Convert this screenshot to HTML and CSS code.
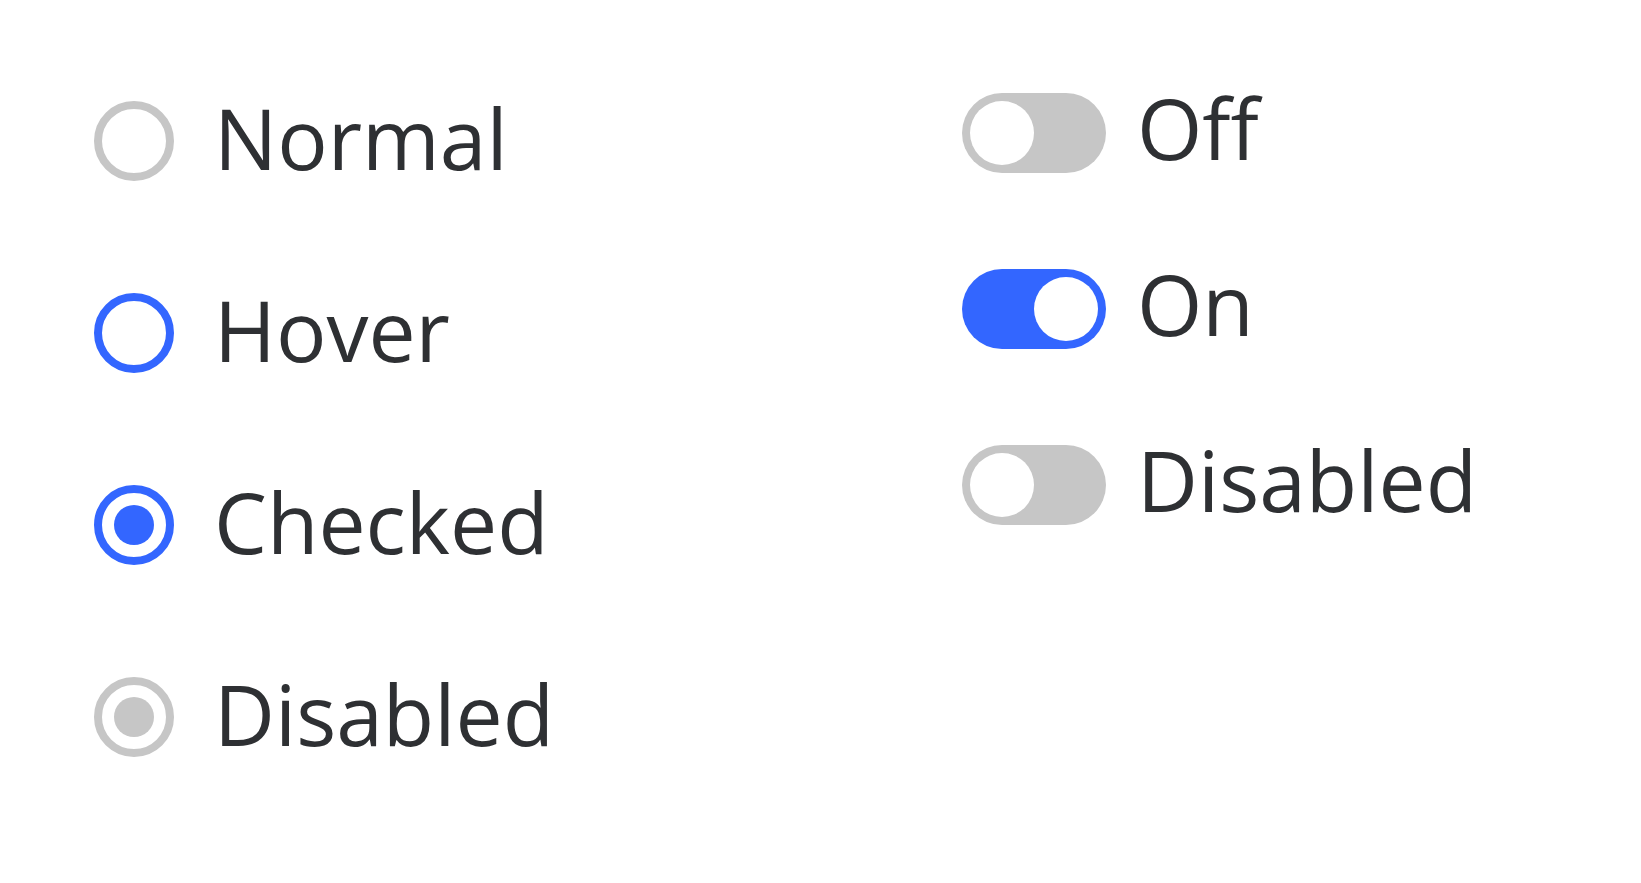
FILE: index.html
```html
<!DOCTYPE html>
<html lang="en">
<head>
<meta charset="utf-8">
<title>Radios and toggles</title>
<link rel="stylesheet" href="styles.css">
</head>
<body>
<main class="page">
  <section class="radios">
    <label class="radio-row">
      <span class="radio"></span>
      <span class="label">Normal</span>
    </label>
    <label class="radio-row">
      <span class="radio radio--hover"></span>
      <span class="label">Hover</span>
    </label>
    <label class="radio-row">
      <span class="radio radio--checked"><span class="dot"></span></span>
      <span class="label">Checked</span>
    </label>
    <label class="radio-row">
      <span class="radio radio--disabled"><span class="dot"></span></span>
      <span class="label">Disabled</span>
    </label>
  </section>
  <section class="toggles">
    <label class="toggle-row">
      <span class="toggle"><span class="knob"></span></span>
      <span class="label label--toggle">Off</span>
    </label>
    <label class="toggle-row">
      <span class="toggle toggle--on"><span class="knob"></span></span>
      <span class="label label--toggle">On</span>
    </label>
    <label class="toggle-row">
      <span class="toggle toggle--disabled"><span class="knob"></span></span>
      <span class="label label--toggle">Disabled</span>
    </label>
  </section>
</main>
</body>
</html>
```

FILE: styles.css
```css
html, body {
  margin: 0;
  padding: 0;
  background: #ffffff;
}

body {
  font-family: "Open Sans", "Noto Sans", sans-serif;
  color: #2e3033;
}

.page {
  display: grid;
  grid-template-columns: 868px 1fr;
  padding-left: 94px;
}

.radios {
  display: flex;
  flex-direction: column;
  gap: 112px;
  padding-top: 101px;
}

.toggles {
  display: flex;
  flex-direction: column;
  gap: 96px;
  padding-top: 93px;
}

.radio-row {
  display: flex;
  align-items: center;
  gap: 40px;
  height: 80px;
}

.toggle-row {
  display: flex;
  align-items: center;
  gap: 31px;
  height: 80px;
}

.label {
  font-size: 84px;
  line-height: 1;
  white-space: nowrap;
  margin-bottom: 6px;
}

.label--toggle {
  margin-bottom: 10px;
}

.radio {
  box-sizing: border-box;
  width: 80px;
  height: 80px;
  border-radius: 50%;
  border: 8px solid #c6c6c6;
  background: #ffffff;
  display: flex;
  align-items: center;
  justify-content: center;
  flex-shrink: 0;
}

.radio--hover,
.radio--checked {
  border-color: #3366ff;
}

.dot {
  width: 40px;
  height: 40px;
  border-radius: 50%;
  background: #3366ff;
}

.radio--disabled .dot {
  background: #c6c6c6;
}

.toggle {
  box-sizing: border-box;
  width: 144px;
  height: 80px;
  border-radius: 40px;
  background: #c6c6c6;
  padding: 8px;
  display: flex;
  justify-content: flex-start;
  flex-shrink: 0;
}

.toggle--on {
  background: #3366ff;
  justify-content: flex-end;
}

.knob {
  width: 64px;
  height: 64px;
  border-radius: 50%;
  background: #ffffff;
}
```
